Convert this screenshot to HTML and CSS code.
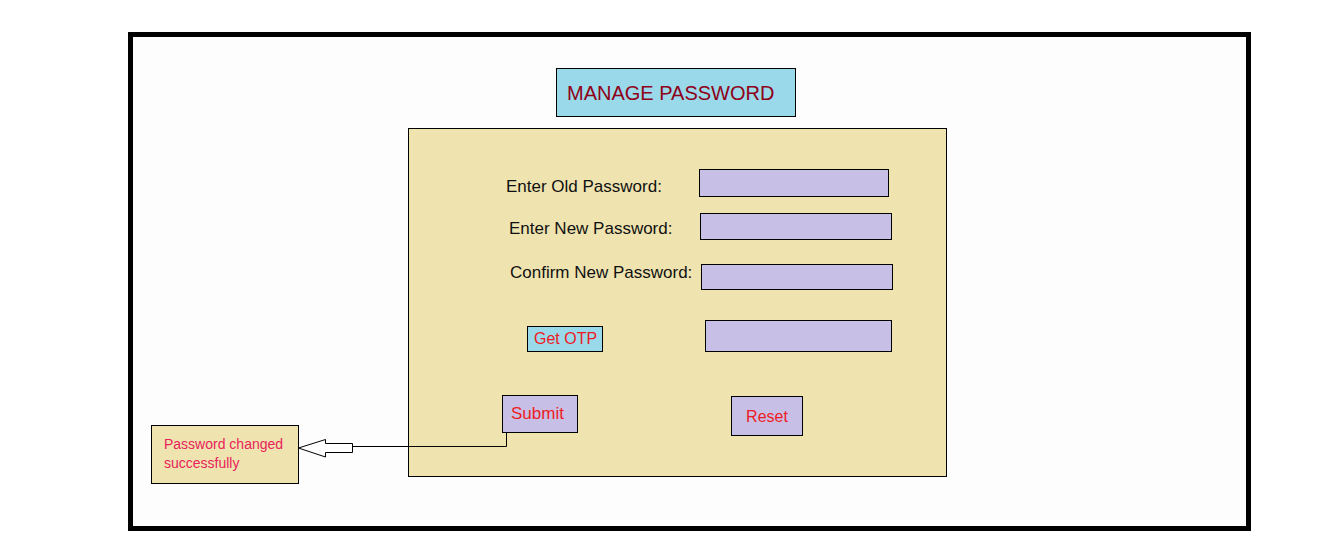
FILE: index.html
```html
<!DOCTYPE html>
<html lang="en">
<head>
    <meta charset="UTF-8">
    <title>Manage Password</title>
    <link rel="stylesheet" href="styles.css">
</head>
<body>
    <div class="frame">
        <div class="title">MANAGE PASSWORD</div>

        <div class="panel">
            <label class="label label-old">Enter Old Password:</label>
            <div class="field field-old"></div>

            <label class="label label-new">Enter New Password:</label>
            <div class="field field-new"></div>

            <label class="label label-confirm">Confirm New Password:</label>
            <div class="field field-confirm"></div>

            <div class="btn btn-otp">Get OTP</div>
            <div class="field field-otp"></div>

            <div class="btn btn-submit">Submit</div>
            <div class="btn btn-reset">Reset</div>
        </div>

        <!-- submit -> success message -->
        <svg class="connector" width="220" height="30" viewBox="0 0 220 30">
            <polyline points="216.5,3 216.5,16.5 62.5,16.5" fill="none" stroke="#000" stroke-width="1"/>
            <polygon points="62.5,13.5 35.5,13.5 35.5,9.5 8.5,18 35.5,27 35.5,22.5 62.5,22.5" fill="#fff" stroke="#000" stroke-width="1"/>
        </svg>

        <div class="message">Password changed<br>successfully</div>
    </div>
</body>
</html>
```

FILE: styles.css
```css
* {
    margin: 0;
    padding: 0;
    box-sizing: border-box;
}

body {
    background: #fff;
    font-family: 'Liberation Sans', Arial, sans-serif;
    width: 1340px;
    height: 548px;
    overflow: hidden;
}

.frame {
    position: relative;
    margin: 32px 0 0 128px;
    width: 1123px;
    height: 499px;
    border: 5px solid #000;
    background: #fdfdfd;
}

.title {
    position: absolute;
    left: 423px;
    top: 31px;
    width: 240px;
    height: 49px;
    display: flex;
    align-items: center;
    padding: 1px 0 0 10px;
    background: #99d9ea;
    border: 1px solid #000;
    color: #8e0018;
    font-size: 20px;
    line-height: 20px;
}

.panel {
    position: absolute;
    left: 275px;
    top: 91px;
    width: 539px;
    height: 349px;
    background: #efe4b0;
    border: 1px solid #000;
}

.label {
    position: absolute;
    font-size: 17px;
    line-height: 20px;
    color: #111;
    white-space: nowrap;
}

.label-old { left: 97px; top: 48px; }
.label-new { left: 100px; top: 90px; }
.label-confirm { left: 101px; top: 134px; }

.field {
    position: absolute;
    background: #c8bfe7;
    border: 1px solid #000;
}

.field-old { left: 290px; top: 40px; width: 190px; height: 28px; }
.field-new { left: 291px; top: 84px; width: 192px; height: 27px; }
.field-confirm { left: 292px; top: 135px; width: 192px; height: 26px; }
.field-otp { left: 296px; top: 191px; width: 187px; height: 32px; }

.btn {
    position: absolute;
    display: flex;
    align-items: center;
    border: 1px solid #000;
    color: #ed1c24;
    font-size: 17px;
    line-height: 20px;
    white-space: nowrap;
}

.btn-otp {
    left: 118px;
    top: 197px;
    width: 76px;
    height: 26px;
    padding-left: 6px;
    background: #99d9ea;
    font-size: 16px;
}

.btn-submit {
    left: 93px;
    top: 266px;
    width: 76px;
    height: 38px;
    padding-left: 8px;
    background: #c8bfe7;
}

.btn-reset {
    left: 322px;
    top: 267px;
    width: 72px;
    height: 40px;
    justify-content: center;
    padding-top: 1px;
    background: #c8bfe7;
    font-size: 16px;
}

.connector {
    position: absolute;
    left: 157px;
    top: 393px;
}

.message {
    position: absolute;
    left: 18px;
    top: 388px;
    width: 148px;
    height: 59px;
    padding: 9px 0 0 12px;
    background: #efe4b0;
    border: 1px solid #000;
    color: #e8225a;
    font-size: 14px;
    line-height: 18.5px;
}
```
